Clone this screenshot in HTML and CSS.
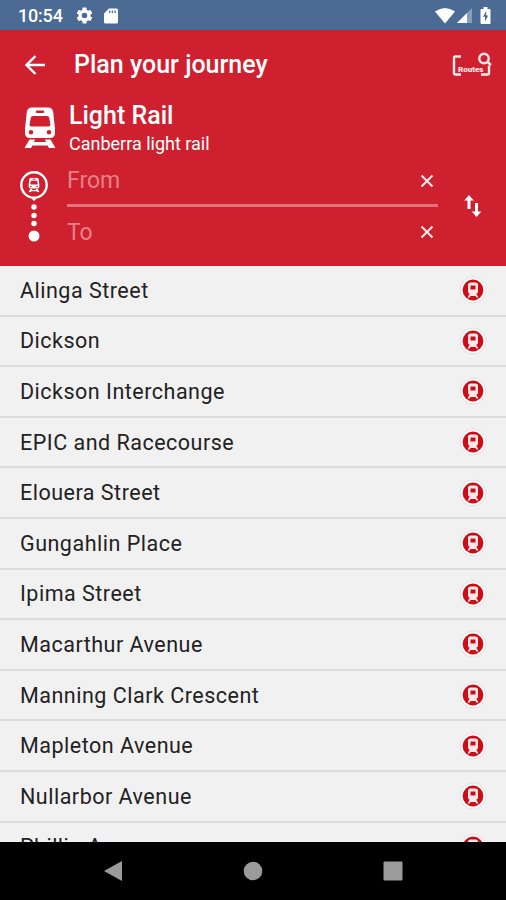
FILE: index.html
```html
<!DOCTYPE html>
<html lang="en">
<head>
    <meta charset="UTF-8">
    <meta name="viewport" content="width=device-width, initial-scale=1.0">
    <title>Plan your journey</title>
    <link rel="stylesheet" href="styles.css">
</head>
<body>
    <!-- Shared icons -->
    <svg class="sprite" aria-hidden="true">
        <symbol id="train" viewBox="0 0 32 42">
            <path fill-rule="evenodd" d="M8 0.5H24Q28.6 0.5 29.2 5L31 22V26Q31 31 26 31H6Q1 31 1 26V22L2.800 5Q3.400 0.500 8 0.500ZM13 3.500A1.200 1.200 0 0 0 13 6H19A1.200 1.200 0 0 0 19 3.500ZM9 9Q7 9 6.700 11L5.600 17.500Q5.400 19.500 7.500 19.500H24.500Q26.600 19.500 26.400 17.500L25.300 11Q25 9 23 9ZM7 23A2.300 2.300 0 1 0 7 27.600A2.300 2.300 0 1 0 7 23ZM25 23A2.300 2.300 0 1 0 25 27.600A2.300 2.300 0 1 0 25 23Z"/>
            <path d="M5.500 32.500H11L10 35H22L21 32.500H26.500L31.500 41H25L23.500 38.500H8.500L7 41H0.500Z"/>
        </symbol>
        <symbol id="stop" viewBox="0 0 28 28">
            <circle cx="14" cy="14" r="13" fill="#fafafa" stroke="#e2e2e2" stroke-width="1"/>
            <circle cx="14" cy="14" r="10.400" fill="#cc0d18"/>
            <path fill="#fbe9e9" fill-rule="evenodd" d="M11.500 6.500H16.500Q19 6.500 19 9V15.500Q19 17.500 17.300 17.800L19.500 21.500H17.300L16.500 20H11.500L10.700 21.500H8.500L10.700 17.800Q9 17.500 9 15.500V9Q9 6.500 11.500 6.500ZM11.500 9.500V13.500H16.500V9.500Z"/>
        </symbol>
        <symbol id="close" viewBox="0 0 14 14">
            <path d="M1.500 1.500L12.500 12.500M12.500 1.500L1.500 12.500" fill="none" stroke="#ffe9e9" stroke-width="2"/>
        </symbol>
    </svg>

    <div class="status-bar">
        <span class="time">10:54</span>
        <svg class="gear" viewBox="0 0 24 24"><path d="M19.430 12.980c.04-.32.07-.64.07-.98s-.03-.66-.07-.98l2.110-1.650c.19-.15.24-.42.12-.64l-2-3.460c-.12-.22-.39-.3-.61-.22l-2.490 1c-.52-.4-1.080-.73-1.690-.98l-.38-2.650A.488.488 0 0 0 14 2h-4c-.25 0-.46.18-.49.42l-.38 2.650c-.61.25-1.170.59-1.690.98l-2.490-1c-.23-.09-.49 0-.61.22l-2 3.460c-.13.22-.07.49.12.64l2.110 1.650c-.04.32-.07.65-.07.98s.03.66.07.98l-2.110 1.650c-.19.15-.24.42-.12.64l2 3.460c.12.22.39.3.61.22l2.490-1c.52.4 1.080.73 1.690.98l.38 2.650c.03.24.24.42.49.42h4c.25 0 .46-.18.49-.42l.38-2.650c.61-.25 1.170-.59 1.690-.98l2.490 1c.23.09.49 0 .61-.22l2-3.460c.12-.22.07-.49-.12-.64zM12 15.500a3.500 3.500 0 1 1 0-7 3.500 3.500 0 0 1 0 7z"/></svg>
        <svg class="card" viewBox="0 0 14 16"><path fill-rule="evenodd" d="M5 0.500H12.500Q14 0.500 14 2V14Q14 15.500 12.500 15.500H1.500Q0 15.500 0 14V5.500ZM5 2.500V5H6.300V2.500ZM7.700 2.500V5H9V2.500ZM10.400 2.500V5H11.700V2.500Z"/></svg>
        <svg class="wifi" viewBox="0 0 20 16"><path d="M0 3.500Q10 -3.500 20 3.500L10 15.500Z"/></svg>
        <svg class="signal" viewBox="0 0 15 15"><path opacity=".35" d="M15 0V15H0Z"/><path d="M10 5V15H0Z"/></svg>
        <svg class="battery" viewBox="0 0 11 17"><path fill-rule="evenodd" d="M3.500 0H7.500V2H9.500Q10.500 2 10.500 3V16Q10.500 17 9.500 17H1.500Q0.500 17 0.500 16V3Q0.500 2 1.500 2H3.500ZM6.200 4L3 9.800H5V14.500L8.200 8.500H6.200Z"/></svg>
    </div>

    <div class="header">
        <div class="app-bar">
            <svg class="back" viewBox="0 0 20 20"><path d="M20 10H2M10.500 1L1.500 10L10.500 19"/></svg>
            <h1>Plan your journey</h1>
            <svg class="routes" viewBox="0 0 40 26">
                <path d="M9 4.500H3.500Q2 4.500 2 6V21Q2 22.500 3.500 22.500H9M29 22.500H35.500Q37 22.500 37 21V13.500"/>
                <circle cx="32" cy="6.500" r="4.700"/>
                <path d="M35.500 10L39 13"/>
                <text x="6" y="20">Routes</text>
            </svg>
        </div>

        <div class="mode">
            <svg class="mode-icon"><use href="#train"/></svg>
            <div>
                <div class="mode-name">Light Rail</div>
                <div class="mode-detail">Canberra light rail</div>
            </div>
        </div>

        <div class="search">
            <svg class="trail" viewBox="0 0 30 76">
                <circle cx="15" cy="15" r="12.700" fill="none" stroke="#fff" stroke-width="2.400"/>
                <path d="M11 27L15 31L19 27Z"/>
                <svg x="9" y="7.500" width="12" height="15"><use href="#train"/></svg>
                <circle cx="15" cy="37" r="2.700"/>
                <circle cx="15" cy="45.500" r="2.700"/>
                <circle cx="15" cy="53.500" r="2.700"/>
                <circle cx="15" cy="66" r="5.500"/>
            </svg>
            <div class="fields">
                <div class="field">
                    <span>From</span>
                    <svg class="clear"><use href="#close"/></svg>
                </div>
                <div class="field">
                    <span>To</span>
                    <svg class="clear"><use href="#close"/></svg>
                </div>
            </div>
            <svg class="swap" viewBox="0 0 18 22"><path d="M5 0L9.800 5.500H6.500V14H3.500V5.500H0.200ZM12.500 22L17.300 16.500H14V8H11V16.500H7.700Z"/></svg>
        </div>
    </div>

    <div class="stops">
        <div class="stop"><span>Alinga Street</span><svg><use href="#stop"/></svg></div>
        <div class="stop"><span>Dickson</span><svg><use href="#stop"/></svg></div>
        <div class="stop"><span>Dickson Interchange</span><svg><use href="#stop"/></svg></div>
        <div class="stop"><span>EPIC and Racecourse</span><svg><use href="#stop"/></svg></div>
        <div class="stop"><span>Elouera Street</span><svg><use href="#stop"/></svg></div>
        <div class="stop"><span>Gungahlin Place</span><svg><use href="#stop"/></svg></div>
        <div class="stop"><span>Ipima Street</span><svg><use href="#stop"/></svg></div>
        <div class="stop"><span>Macarthur Avenue</span><svg><use href="#stop"/></svg></div>
        <div class="stop"><span>Manning Clark Crescent</span><svg><use href="#stop"/></svg></div>
        <div class="stop"><span>Mapleton Avenue</span><svg><use href="#stop"/></svg></div>
        <div class="stop"><span>Nullarbor Avenue</span><svg><use href="#stop"/></svg></div>
        <div class="stop"><span>Phillip Avenue</span><svg><use href="#stop"/></svg></div>
    </div>

    <div class="nav-bar">
        <svg viewBox="0 0 20 22"><path d="M19 1V21L1 11Z"/></svg>
        <svg viewBox="0 0 20 22"><circle cx="10" cy="11" r="9.300"/></svg>
        <svg viewBox="0 0 20 22"><rect x="0.500" y="1.500" width="19" height="19" rx="1"/></svg>
    </div>
</body>
</html>
```

FILE: styles.css
```css
/* Base styles */
* {
    box-sizing: border-box;
}

body {
    margin: 0;
    height: 900px;
    display: flex;
    flex-direction: column;
    overflow: hidden;
    font-family: Roboto, sans-serif;
    background-color: #f1f1f1;
}

svg {
    display: block;
    flex: none;
    fill: #fff;
}

.sprite {
    display: none;
}

/* Android status bar */
.status-bar {
    flex: none;
    height: 30px;
    padding: 1px 15px 0 18px;
    display: flex;
    align-items: center;
    background-color: #4b6a94;
    color: #fff;
}

.time {
    width: 57px;
    font-size: 18px;
    font-weight: 500;
    letter-spacing: -0.2px;
}

.gear {
    width: 19px;
    height: 19px;
}

.card {
    width: 14px;
    height: 16px;
    margin-left: 10px;
}

.wifi {
    width: 20px;
    height: 16px;
    margin-left: auto;
}

.signal {
    width: 15px;
    height: 15px;
    margin-left: 2px;
}

.battery {
    width: 11px;
    height: 17px;
    margin-left: 8px;
}

/* Red header */
.header {
    flex: none;
    height: 236px;
    background-color: #cf202f;
    color: #fff;
}

.app-bar {
    height: 70px;
    padding: 0 14px 0 25px;
    display: flex;
    align-items: center;
}

.back {
    width: 20px;
    height: 20px;
    fill: none;
    stroke: #fff;
    stroke-width: 2.4;
}

h1 {
    flex: 1;
    margin: 0 0 0 29px;
    font-size: 25px;
    font-weight: 500;
    line-height: 30px;
}

.routes {
    width: 40px;
    height: 26px;
    fill: none;
    stroke: #ffe9e9;
    stroke-width: 2.4;
}

.routes text {
    font-size: 8px;
    font-weight: 900;
    fill: #ffe9e9;
    stroke: none;
}

/* Transport mode */
.mode {
    height: 70px;
    padding: 1px 0 0 24px;
    display: flex;
}

.mode-icon {
    width: 32px;
    height: 42px;
    margin: 6px 13px 0 0;
}

.mode-name {
    font-size: 25px;
    font-weight: 500;
    line-height: 30px;
}

.mode-detail {
    font-size: 18px;
    line-height: 26px;
}

/* From / To */
.search {
    height: 96px;
    padding-left: 19px;
    display: flex;
}

.trail {
    width: 30px;
    height: 76px;
}

.fields {
    width: 371px;
    margin: -13px 0 0 18px;
}

.field {
    height: 50px;
    padding: 0 4px 0 0;
    display: flex;
    align-items: center;
    justify-content: space-between;
    color: #e98088;
    font-size: 23px;
}

.field:first-child {
    border-bottom: 3px solid #de747d;
}

.clear {
    width: 14px;
    height: 14px;
}

.swap {
    width: 18px;
    height: 22px;
    margin: 25px 0 0 26px;
}

/* Stop list */
.stops {
    flex: 1;
    min-height: 0;
    overflow: hidden;
}

.stop {
    height: 50.6px;
    padding: 0 19px 0 20px;
    display: flex;
    align-items: center;
    justify-content: space-between;
    border-bottom: 2px solid #dcdcdc;
    color: #222;
    font-size: 21.500px;
    letter-spacing: 0.500px;
}

.stop svg {
    width: 28px;
    height: 28px;
}

/* Android navigation bar */
.nav-bar {
    flex: none;
    height: 58px;
    padding: 0 103px;
    display: flex;
    align-items: center;
    justify-content: space-between;
    background-color: #000;
}

.nav-bar svg {
    width: 20px;
    height: 22px;
    fill: #9b9b9b;
}
```
